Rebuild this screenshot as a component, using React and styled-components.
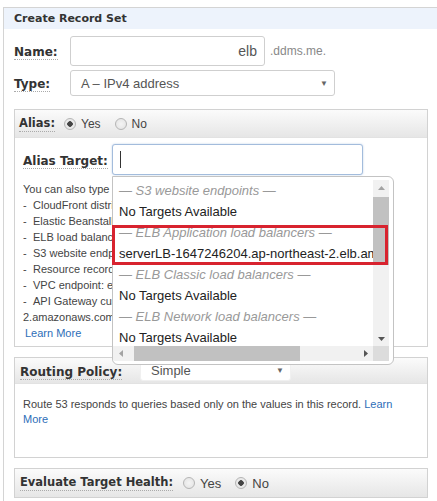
import React from 'react';
import styled, { createGlobalStyle } from 'styled-components';

const GlobalStyle = createGlobalStyle`
  html, body {
    margin: 0;
    padding: 0;
    background: #fff;
    overflow: hidden;
  }
  body {
    font-family: "Liberation Sans", Arial, sans-serif;
    color: #333;
  }
`;

const Page = styled.div`
  padding: 7px 0 0 3px;
`;

const Panel = styled.div`
  border-left: 1px solid #d4d4d4;
  border-top: 1px solid #d4d4d4;
  height: 494px;
`;

const PanelTitle = styled.div`
  height: 21px;
  display: flex;
  align-items: center;
  padding-left: 10px;
  background: #edf3fc;
  font-family: "DejaVu Sans", Verdana, sans-serif;
  font-weight: bold;
  font-size: 11px;
  color: #333;
`;

const Body = styled.div`
  padding: 7px 0 0 10px;
  width: 414px;
`;

const Row = styled.div`
  display: flex;
  align-items: center;
  margin-top: ${({ gap }) => gap || 0}px;
`;

const Label = styled.span`
  font-family: "DejaVu Sans", Verdana, sans-serif;
  font-weight: bold;
  font-size: ${({ size }) => size || 12}px;
  color: #333;
  border-bottom: 1px dotted #aaa;
  line-height: 15px;
  flex: none;
`;

const LabelCell = styled.div`
  width: ${({ width }) => width}px;
  flex: none;
`;

const TextInput = styled.div`
  box-sizing: border-box;
  width: ${({ width }) => width}px;
  height: ${({ height }) => height}px;
  border: 1px solid ${({ focused }) => (focused ? '#a3bcdc' : '#cfcfcf')};
  border-radius: 3px;
  box-shadow: ${({ focused }) => (focused ? '0 0 2px rgba(120,160,210,0.5)' : 'none')};
  display: flex;
  align-items: center;
  justify-content: ${({ align }) => (align === 'right' ? 'flex-end' : 'flex-start')};
  padding: 0 7px;
  font-size: 14px;
  color: #555;
  background: #fff;
`;

const Caret = styled.span`
  width: 1px;
  height: 17px;
  background: #333;
`;

const Suffix = styled.span`
  margin-left: 5px;
  font-size: 12px;
  color: #888;
`;

const Select = styled.div`
  box-sizing: border-box;
  width: ${({ width }) => width}px;
  height: ${({ height }) => height}px;
  border: 1px solid ${({ borderless }) => (borderless ? '#f0f0f0' : '#cfcfcf')};
  border-radius: 3px;
  background: #fff;
  display: flex;
  align-items: center;
  justify-content: space-between;
  padding: 0 6px 0 10px;
  font-size: 13px;
  color: #555;
`;

const Arrow = styled.span`
  font-size: 8px;
  color: #666;
`;

const Section = styled.div`
  margin-top: ${({ gap }) => gap}px;
  border: 1px solid #d2d2d2;
  background: #fff;
`;

const SectionHead = styled.div`
  height: ${({ height }) => height}px;
  display: flex;
  align-items: center;
  padding-left: ${({ pad }) => pad || 5}px;
  background: linear-gradient(#fbfbfb, #e6e6e6);
  border-bottom: ${({ closed }) => (closed ? 'none' : '1px solid #e2e2e2')};
`;

const RadioGroup = styled.label`
  display: flex;
  align-items: center;
  margin-left: ${({ gap }) => gap}px;
  font-size: ${({ size }) => size || 12}px;
  color: #444;
`;

const Radio = styled.span`
  box-sizing: border-box;
  width: 12px;
  height: 12px;
  border-radius: 50%;
  border: 1px solid #b5b5b5;
  background: radial-gradient(circle, ${({ checked }) => (checked ? '#444 0 2.5px, #e9e9e9 3px' : '#f4f4f4 0, #e4e4e4 6px')});
  margin-right: 5px;
`;

const AliasBody = styled.div`
  position: relative;
  padding: 6px 8px 5px 8px;
`;

const Help = styled.div`
  margin-top: 6px;
  font-size: 11px;
  line-height: 16px;
  color: #444;
  width: 89px;
  overflow: hidden;
  white-space: nowrap;
`;

const HelpLine = styled.div`
  display: flex;
`;

const Dash = styled.span`
  width: 10px;
  flex: none;
`;

const Link = styled.a`
  color: #2d6eb8;
  text-decoration: none;
  font-size: 11px;
  margin-left: ${({ indent }) => indent || 0}px;
`;

const Dropdown = styled.div`
  position: absolute;
  left: 97px;
  top: 38px;
  box-sizing: border-box;
  width: 282px;
  height: 189px;
  border: 1px solid #c3c3c3;
  border-radius: 0 6px 6px 6px;
  background: #fff;
  padding: 3px 4px 3px 0;
  display: grid;
  grid-template-columns: 1fr 16px;
  grid-template-rows: 1fr 15px;
  z-index: 2;
`;

const Viewport = styled.div`
  overflow: hidden;
  white-space: nowrap;
`;

const Option = styled.div`
  height: 21px;
  line-height: 21px;
  padding-left: 6px;
  font-size: 13px;
  color: ${({ group }) => (group ? '#999' : '#222')};
  font-style: ${({ group }) => (group ? 'italic' : 'normal')};
`;

const VTrack = styled.div`
  background: #f1f1f1;
  display: flex;
  flex-direction: column;
  align-items: center;
`;

const HTrack = styled.div`
  background: #f1f1f1;
  display: flex;
  align-items: center;
`;

const ScrollBtn = styled.div`
  flex: none;
  width: ${({ horizontal }) => (horizontal ? 15 : 16)}px;
  height: 15px;
  display: flex;
  align-items: center;
  justify-content: center;
`;

const Thumb = styled.div`
  background: #c1c1c1;
  flex: none;
  width: ${({ w }) => w}px;
  height: ${({ h }) => h}px;
  margin: ${({ m }) => m};
`;

const Spacer = styled.div`
  flex: 1;
`;

const Corner = styled.div`
  background: #dcdcdc;
`;

const Highlight = styled.div`
  position: absolute;
  left: -1px;
  top: 48px;
  box-sizing: border-box;
  width: 276px;
  height: 40px;
  border: 3px solid #d8232f;
  pointer-events: none;
`;

const RoutingBody = styled.div`
  padding: 13px 8px 15px 8px;
  font-size: 11px;
  line-height: 15px;
  color: #444;
  height: 45px;
`;

const Tri = ({ dir, color = '#a3a3a3' }) => {
  const pts = {
    up: '0,4 3.5,0 7,4',
    down: '0,0 7,0 3.5,4',
    left: '4,0 4,7 0,3.5',
    right: '0,0 0,7 4,3.5',
  }[dir];
  const vertical = dir === 'up' || dir === 'down';
  return (
    <svg width={vertical ? 7 : 4} height={vertical ? 4 : 7} viewBox={vertical ? '0 0 7 4' : '0 0 4 7'}>
      <polygon points={pts} fill={color} />
    </svg>
  );
};

const helpLines = [
  'CloudFront distribution domain name: d111111abcdef8.cloudfront.net',
  'Elastic Beanstalk environment CNAME: example.elasticbeanstalk.com',
  'ELB load balancer DNS name: example-1.us-east-2.elb.amazonaws.com',
  'S3 website endpoint: s3-website.us-east-2.amazonaws.com',
  'Resource record set in this hosted zone: www.example.com',
  'VPC endpoint: example.us-east-2.vpce.amazonaws.com',
  'API Gateway custom regional API: d-abcde12345.execute-api.us-west-',
];

const options = [
  { text: '— S3 website endpoints —', group: true },
  { text: 'No Targets Available' },
  { text: '— ELB Application load balancers —', group: true },
  { text: 'serverLB-1647246204.ap-northeast-2.elb.amazonaws.com.' },
  { text: '— ELB Classic load balancers —', group: true },
  { text: 'No Targets Available' },
  { text: '— ELB Network load balancers —', group: true },
  { text: 'No Targets Available' },
];

export default function App() {
  return (
    <>
      <GlobalStyle />
      <Page>
        <Panel>
          <PanelTitle>Create Record Set</PanelTitle>
          <Body>
            <Row>
              <LabelCell width={56}>
                <Label>Name:</Label>
              </LabelCell>
              <TextInput width={195} height={30} align="right">elb</TextInput>
              <Suffix>.ddms.me.</Suffix>
            </Row>
            <Row gap={4}>
              <LabelCell width={56}>
                <Label>Type:</Label>
              </LabelCell>
              <Select width={265} height={26}>
                A – IPv4 address
                <Arrow>▼</Arrow>
              </Select>
            </Row>

            <Section gap={13}>
              <SectionHead height={27} pad={4}>
                <Label size={11.5}>Alias:</Label>
                <RadioGroup gap={9}>
                  <Radio checked />
                  Yes
                </RadioGroup>
                <RadioGroup gap={14}>
                  <Radio />
                  No
                </RadioGroup>
              </SectionHead>
              <AliasBody>
                <Row>
                  <LabelCell width={89}>
                    <Label>Alias Target:</Label>
                  </LabelCell>
                  <TextInput width={251} height={31} focused>
                    <Caret />
                  </TextInput>
                </Row>
                <Help>
                  <div>You can also type the domain name for the resource. Examples:</div>
                  {helpLines.map((line) => (
                    <HelpLine key={line}>
                      <Dash>-</Dash>
                      {line}
                    </HelpLine>
                  ))}
                  <div>2.amazonaws.com</div>
                  <Link indent={2}>Learn More</Link>
                </Help>

                <Dropdown>
                  <Viewport>
                    {options.map((o, i) => (
                      <Option key={i} group={o.group}>{o.text}</Option>
                    ))}
                  </Viewport>
                  <VTrack>
                    <ScrollBtn><Tri dir="up" /></ScrollBtn>
                    <Thumb w={16} h={68} m="2px 0 0 0" />
                    <Spacer />
                    <ScrollBtn><Tri dir="down" color="#555" /></ScrollBtn>
                  </VTrack>
                  <HTrack>
                    <ScrollBtn horizontal><Tri dir="left" /></ScrollBtn>
                    <Thumb w={166} h={15} m="0 0 0 6px" />
                    <Spacer />
                    <ScrollBtn horizontal><Tri dir="right" color="#555" /></ScrollBtn>
                  </HTrack>
                  <Corner />
                  <Highlight />
                </Dropdown>
              </AliasBody>
            </Section>

            <Section gap={10}>
              <SectionHead height={25} pad={5}>
                <LabelCell width={120}>
                  <Label>Routing Policy:</Label>
                </LabelCell>
                <Select width={151} height={20} borderless>
                  Simple
                  <Arrow>▼</Arrow>
                </Select>
              </SectionHead>
              <RoutingBody>
                Route 53 responds to queries based only on the values in this record.{' '}
                <Link>Learn More</Link>
              </RoutingBody>
            </Section>

            <Section gap={10}>
              <SectionHead height={28} pad={5} closed>
                <Label size={11.5}>Evaluate Target Health:</Label>
                <RadioGroup gap={10} size={13}>
                  <Radio />
                  Yes
                </RadioGroup>
                <RadioGroup gap={14} size={13}>
                  <Radio checked />
                  No
                </RadioGroup>
              </SectionHead>
            </Section>
          </Body>
        </Panel>
      </Page>
    </>
  );
}
